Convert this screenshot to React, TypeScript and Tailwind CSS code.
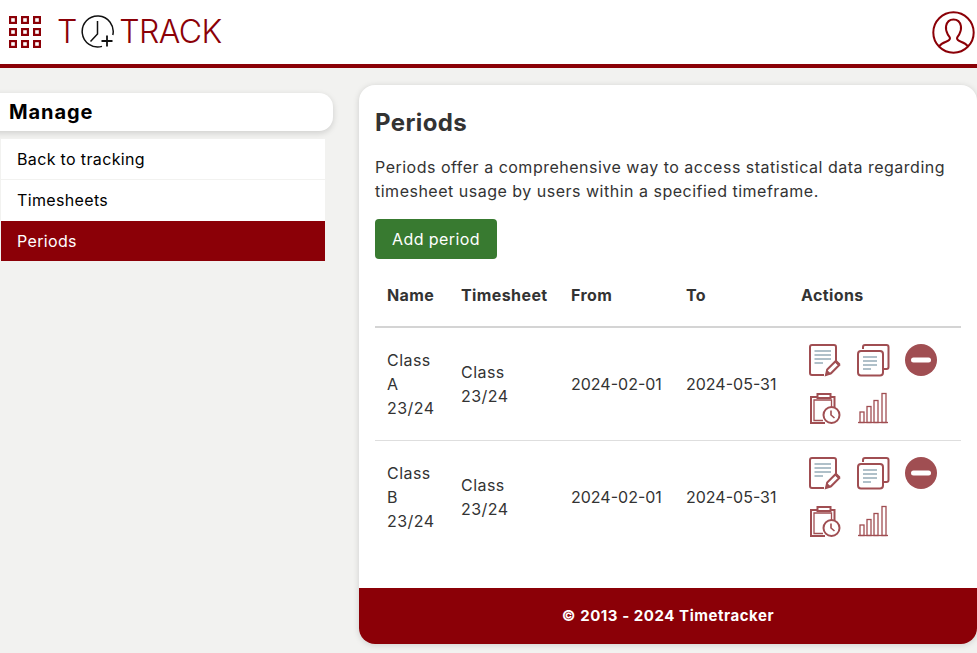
import React from 'react';

const RED = '#8b0007';
const ICON = '#a04e52';

const GridLogo = () => (
  <svg width="33" height="33" viewBox="0 0 33 33" fill="none" stroke={RED} strokeWidth="2.2">
    {[0, 1, 2].map((r) =>
      [0, 1, 2].map((c) => <rect key={`${r}${c}`} x={1.1 + c * 12} y={1.1 + r * 12} width="5.800" height="5.800" />),
    )}
  </svg>
);

const ClockLogo = () => (
  <svg width="34" height="34" viewBox="0 0 34 34" fill="none" stroke="#111" strokeWidth="1.5">
    <path d="M21 31.400A15.500 15.500 0 1 1 31.800 20" />
    <path d="M16.500 6v13L9.500 26.500" />
    <path strokeWidth="1.800" d="M26 20.500v11M20.500 26h11" />
  </svg>
);

const UserIcon = () => (
  <svg width="43" height="43" viewBox="0 0 43 43" fill="none" stroke={RED} strokeWidth="2">
    <circle cx="21.500" cy="21.500" r="20.200" />
    <path d="M7 35.500c1.500-2.500 4-3.800 7-4.800 2.600-.9 4-1.600 4-3.400 0-1.200-1.400-2.200-2.300-4-1.400-2.800-2.100-5.800-1.600-8.300.8-4 3.400-6.500 7.400-6.500s6.600 2.500 7.400 6.500c.5 2.500-.2 5.500-1.600 8.300-.9 1.800-2.300 2.800-2.300 4 0 1.800 1.400 2.500 4 3.400 3 1 5.500 2.300 7 4.800" />
  </svg>
);

const EditIcon = () => (
  <svg width="33" height="33" viewBox="0 0 33 33" fill="none">
    <path d="M15 31H3A2 2 0 0 1 1 29V3a2 2 0 0 1 2-2h22a2 2 0 0 1 2 2v14" stroke={ICON} strokeWidth="2" />
    <path d="M5.500 7h16.500M5.500 11h16.500M5.500 15h16.500M5.500 19h8.500" stroke="#afc0c9" strokeWidth="2" />
    <path d="M17 31l1.200-5.500 8.300-8.300 3.800 3.800-8.300 8.300z" stroke={ICON} strokeWidth="2" fill="#fff" />
    <path d="M16.500 31.500l1.200-6 4.500 4.500z" fill={ICON} />
    <path d="M25.500 18l3.800 3.800 2-2-3.800-3.800z" fill={ICON} />
  </svg>
);

const CopyIcon = () => (
  <svg width="33" height="33" viewBox="0 0 33 33" fill="none">
    <path d="M6 5V3a2 2 0 0 1 2-2h21.500a2 2 0 0 1 2 2v20a2 2 0 0 1-2 2h-2.500" stroke={ICON} strokeWidth="2" />
    <rect x="1" y="7" width="25" height="24.500" rx="3" stroke={ICON} strokeWidth="2" />
    <path d="M6 13h14M6 17h14M6 21h14M6 25h8" stroke="#afc0c9" strokeWidth="2" />
  </svg>
);

const RemoveIcon = () => (
  <svg width="33" height="33" viewBox="0 0 33 33">
    <circle cx="16" cy="16" r="16" fill={ICON} />
    <rect x="6" y="13.500" width="20" height="5" rx="2.500" fill="#fff" />
  </svg>
);

const ClipboardClockIcon = () => (
  <svg width="33" height="33" viewBox="0 0 33 33" fill="none" stroke={ICON}>
    <path d="M16 31H2V5h6M21 5h4.500v10" strokeWidth="2" />
    <path d="M14 28.500H5V8h17.500v7" strokeWidth="1.300" />
    <path d="M8.500 6V2h13v4z" strokeWidth="2" />
    <circle cx="22.500" cy="23" r="8" strokeWidth="2" fill="#fff" />
    <path d="M22 18.500V23l3.500 3" strokeWidth="1.600" />
  </svg>
);

const ChartIcon = () => (
  <svg width="33" height="33" viewBox="0 0 33 33" fill="none" stroke={ICON} strokeWidth="1.300">
    <path d="M1 30.500h30" />
    <rect x="3" y="20" width="4" height="10.500" />
    <rect x="10" y="14.500" width="4" height="16" />
    <rect x="17" y="8.500" width="4" height="22" />
    <rect x="25" y="1.500" width="4" height="29" />
  </svg>
);

const periods = [
  { name: 'Class A 23/24', timesheet: 'Class 23/24', from: '2024-02-01', to: '2024-05-31' },
  { name: 'Class B 23/24', timesheet: 'Class 23/24', from: '2024-02-01', to: '2024-05-31' },
];

const headers = [
  { label: 'Name', width: 'w-[74px]' },
  { label: 'Timesheet', width: 'w-[110px]' },
  { label: 'From', width: 'w-[115px]' },
  { label: 'To', width: 'w-[115px]' },
  { label: 'Actions', width: '' },
];

export default function App() {
  return (
    <div className="min-h-[653px] overflow-hidden bg-[#f2f2f0] font-['Inter','Open_Sans',sans-serif] text-[#333]">
      {/* Header */}
      <header className="flex h-[68px] items-center justify-between border-b-4 border-[#8b0007] bg-white pl-[9px] pr-[2px]">
        <div className="flex items-center">
          <GridLogo />
          <span className="ml-[15px] text-[32px] font-light leading-none text-[#8b0007]">T</span>
          <span className="ml-[4px]"><ClockLogo /></span>
          <span className="ml-[4px] text-[32px] font-light leading-none tracking-[-0.6px] text-[#8b0007]">TRACK</span>
        </div>
        <UserIcon />
      </header>

      <div className="flex">
        {/* Sidebar */}
        <aside className="mt-[25px] w-[359px] shrink-0">
          <div className="-ml-[16px] w-[349px] rounded-[14px] bg-white py-[6px] pl-[25px] text-[20px] font-bold leading-[26px] tracking-[0.9px] text-black shadow-[0_2px_6px_rgba(0,0,0,0.15)]">
            Manage
          </div>
          <nav className="ml-px mt-[8px] w-[324px] text-[16px] tracking-[0.35px] text-black">
            <a className="block h-[41px] border-b border-[#f2f2f0] bg-white pl-4 leading-[40px]">Back to tracking</a>
            <a className="block h-[41px] bg-white pl-4 leading-[41px]">Timesheets</a>
            <a className="block h-[40px] bg-[#8b0007] pl-4 leading-[41px] text-white">Periods</a>
          </nav>
        </aside>

        {/* Main card */}
        <main className="mt-[17px] flex h-[559px] grow flex-col overflow-hidden rounded-[16px] bg-white shadow-[0_1px_6px_rgba(0,0,0,0.15)]">
          <div className="grow px-4 pt-[22px]">
            <h1 className="text-[24px] font-bold leading-[32px] tracking-[0.4px]">Periods</h1>
            <p className="mt-[16px] w-[580px] text-[16px] leading-[24px] tracking-[0.5px]">
              Periods offer a comprehensive way to access statistical data regarding timesheet usage by users within a specified timeframe.
            </p>
            <button className="mt-[16px] h-[40px] w-[122px] rounded-[4px] bg-[#387a30] text-[16px] tracking-[0.4px] text-white">Add period</button>

            <table className="mt-[2px] w-[586px] table-fixed border-collapse text-[16px] leading-[24px]">
              <thead>
                <tr className="h-[66px] border-b-2 border-[#d4d4d4]">
                  {headers.map((h) => (
                    <th key={h.label} className={`${h.width} px-3 pt-[2px] text-left font-bold tracking-[0.4px]`}>
                      {h.label}
                    </th>
                  ))}
                </tr>
              </thead>
              <tbody>
                {periods.map((p) => (
                  <tr key={p.name} className="h-[113px] border-b border-[#dedede] last:border-b-0">
                    <td className="px-3 tracking-[0.45px]">{p.name}</td>
                    <td className="px-3 tracking-[0.45px]">{p.timesheet}</td>
                    <td className="whitespace-nowrap px-3">{p.from}</td>
                    <td className="whitespace-nowrap px-3">{p.to}</td>
                    <td className="pl-[20px] pt-[2px]">
                      <div className="grid w-[129px] grid-cols-[48px_48px_33px] gap-y-[15px]">
                        <EditIcon />
                        <CopyIcon />
                        <RemoveIcon />
                        <ClipboardClockIcon />
                        <ChartIcon />
                      </div>
                    </td>
                  </tr>
                ))}
              </tbody>
            </table>
          </div>
          <footer className="flex h-[56px] shrink-0 items-center justify-center bg-[#8b0007] pt-px text-[15px] font-bold tracking-[0.55px] text-white">
            © 2013 - 2024 Timetracker
          </footer>
        </main>
      </div>
    </div>
  );
}
